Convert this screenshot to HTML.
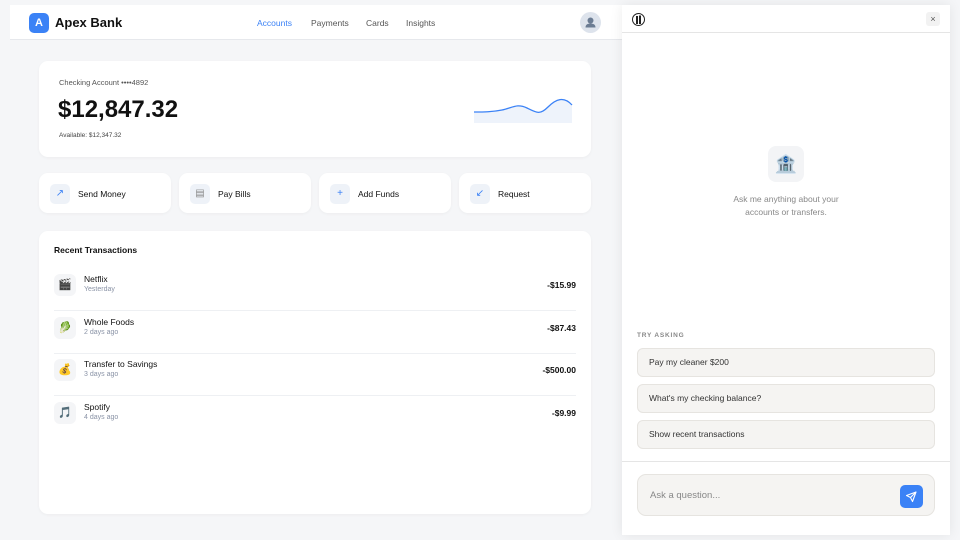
<!DOCTYPE html>
<html><head><meta charset="utf-8"><style>
*{box-sizing:border-box;margin:0;padding:0}
body{width:960px;height:540px;overflow:hidden;background:#f5f6f8;font-family:"Liberation Sans",sans-serif;position:relative;color:#111}
.hdr{position:absolute;left:10px;top:5px;width:620px;height:35px;background:#fff;border-bottom:1px solid #e6e8ec}
.logo{position:absolute;left:19px;top:8px;width:20px;height:20px;border-radius:5px;background:#3b82f6;color:#fff;font-size:11px;font-weight:bold;text-align:center;line-height:20px}
.brand{position:absolute;left:45px;top:10px;font-size:13px;font-weight:bold;color:#111}
.nav{position:absolute;top:13px;font-size:8.5px;color:#555}
.av{position:absolute;left:570px;top:7px;width:21px;height:21px;border-radius:50%;background:#dde3ec}
.card{position:absolute;background:#fff;border-radius:9px;box-shadow:0 1px 3px rgba(0,0,0,.04)}
.act{top:173px;width:132px;height:40px}
.act .ic{position:absolute;left:11px;top:11px;width:20px;height:20px;border-radius:5px;background:#eef2f8;color:#3b82f6;font-size:10px;text-align:center;line-height:20px}
.act .t{position:absolute;left:39px;top:16px;font-size:8.5px;color:#111}
.tx{position:absolute;left:15px;width:522px;height:43px;border-bottom:1px solid #eef0f3}
.tx .ic{position:absolute;left:0;top:6px;width:22px;height:22px;border-radius:6px;background:#f4f5f7;font-size:11px;text-align:center;line-height:22px}
.tx .n{position:absolute;left:30px;top:6px;font-size:8.5px}
.tx .d{position:absolute;left:30px;top:18px;font-size:7px;color:#8a93a6}
.tx .a{position:absolute;right:0;top:12px;font-size:8.5px;font-weight:bold}
.panel{position:absolute;left:622px;top:5px;width:328px;height:530px;background:#fff;box-shadow:0 0 12px rgba(0,0,0,.08)}
.sug{position:absolute;left:15px;width:298px;height:29px;border-radius:6px;background:#f5f4f2;border:1px solid #e6e4e0;font-size:8.5px;color:#333;padding-left:11px;line-height:27px}
</style></head><body>
<div class="hdr">
<div class="logo">A</div><div class="brand">Apex Bank</div>
<div class="nav" style="left:247px;color:#3b82f6">Accounts</div>
<div class="nav" style="left:301px">Payments</div>
<div class="nav" style="left:356px">Cards</div>
<div class="nav" style="left:396px">Insights</div>
<div class="av"><svg width="21" height="21" viewBox="0 0 21 21"><circle cx="10.5" cy="8.5" r="3" fill="#6b7c93"/><path d="M5.5 15.5c0-3 2.2-4 5-4s5 1 5 4z" fill="#6b7c93"/></svg></div>
</div>
<div class="card" style="left:39px;top:61px;width:552px;height:96px">
<div style="position:absolute;left:20px;top:17px;font-size:7.5px;color:#555">Checking Account ••••4892</div>
<div style="position:absolute;left:19px;top:35px;font-size:24px;font-weight:bold;color:#111">$12,847.32</div>
<div style="position:absolute;left:20px;top:71px;font-size:6.5px;color:#444">Available: $12,347.32</div>
<svg style="position:absolute;left:433px;top:34px" width="102" height="30" viewBox="0 0 102 30"><path d="M2 17C12 17 20 17 30 15S45 8 55 13 68 20 76 12 92 1 100 10L100 28L2 28Z" fill="#eef3fb"/><path d="M2 17C12 17 20 17 30 15S45 8 55 13 68 20 76 12 92 1 100 10" fill="none" stroke="#3b82f6" stroke-width="1.3"/></svg>
</div>
<div class="card act" style="left:39px"><div class="ic">↗</div><div class="t">Send Money</div></div>
<div class="card act" style="left:179px"><div class="ic" style="color:#888">▤</div><div class="t">Pay Bills</div></div>
<div class="card act" style="left:319px"><div class="ic">+</div><div class="t">Add Funds</div></div>
<div class="card act" style="left:459px"><div class="ic">↙</div><div class="t">Request</div></div>
<div class="card" style="left:39px;top:231px;width:552px;height:283px">
<div style="position:absolute;left:15px;top:14px;font-size:8.5px;font-weight:bold;color:#111">Recent Transactions</div>
<div class="tx" style="top:37px"><div class="ic">🎬</div><div class="n">Netflix</div><div class="d">Yesterday</div><div class="a">-$15.99</div></div>
<div class="tx" style="top:80px"><div class="ic">🥬</div><div class="n">Whole Foods</div><div class="d">2 days ago</div><div class="a">-$87.43</div></div>
<div class="tx" style="top:122px"><div class="ic">💰</div><div class="n">Transfer to Savings</div><div class="d">3 days ago</div><div class="a">-$500.00</div></div>
<div class="tx" style="top:165px;border:none"><div class="ic">🎵</div><div class="n">Spotify</div><div class="d">4 days ago</div><div class="a">-$9.99</div></div>
</div>
<div class="panel">
<div style="position:absolute;left:0;top:0;width:328px;height:28px;border-bottom:1px solid #e5e5e5"></div>
<svg style="position:absolute;left:10px;top:8px" width="13" height="13" viewBox="0 0 13 13"><circle cx="6.5" cy="6.5" r="6" fill="#fff" stroke="#222"/><rect x="4" y="3" width="2" height="8" fill="#222"/><rect x="7" y="2.5" width="2" height="8.5" fill="#222"/></svg>
<div style="position:absolute;left:304px;top:7px;width:14px;height:14px;border-radius:3px;background:#f2f2f2;font-size:9px;color:#555;text-align:center;line-height:14px">×</div>
<div style="position:absolute;left:146px;top:141px;width:36px;height:36px;border-radius:8px;background:#f3f4f6;font-size:18px;text-align:center;line-height:36px">🏦</div>
<div style="position:absolute;left:0;width:328px;top:188px;text-align:center;font-size:8.5px;color:#888;line-height:13px">Ask me anything about your<br>accounts or transfers.</div>
<div style="position:absolute;left:15px;top:327px;font-size:6.5px;color:#888;letter-spacing:.8px;font-weight:bold">TRY ASKING</div>
<div class="sug" style="top:343px">Pay my cleaner $200</div>
<div class="sug" style="top:379px">What's my checking balance?</div>
<div class="sug" style="top:415px">Show recent transactions</div>
<div style="position:absolute;left:0;top:456px;width:328px;border-top:1px solid #e5e5e5"></div>
<div style="position:absolute;left:15px;top:469px;width:298px;height:42px;border-radius:9px;background:#f5f4f2;border:1px solid #e6e4e0">
<div style="position:absolute;left:12px;top:15px;font-size:9.5px;color:#888">Ask a question...</div>
<div style="position:absolute;left:262px;top:10px;width:23px;height:23px;border-radius:5px;background:#3b82f6"><svg width="23" height="23" viewBox="0 0 23 23"><path d="M16 7L6.5 10.5 10.5 12.5 12.5 16.5Z M16 7L10.5 12.5" fill="none" stroke="#fff" stroke-width="1.1" stroke-linejoin="round"/></svg></div>
</div>
</div>
</body></html>
